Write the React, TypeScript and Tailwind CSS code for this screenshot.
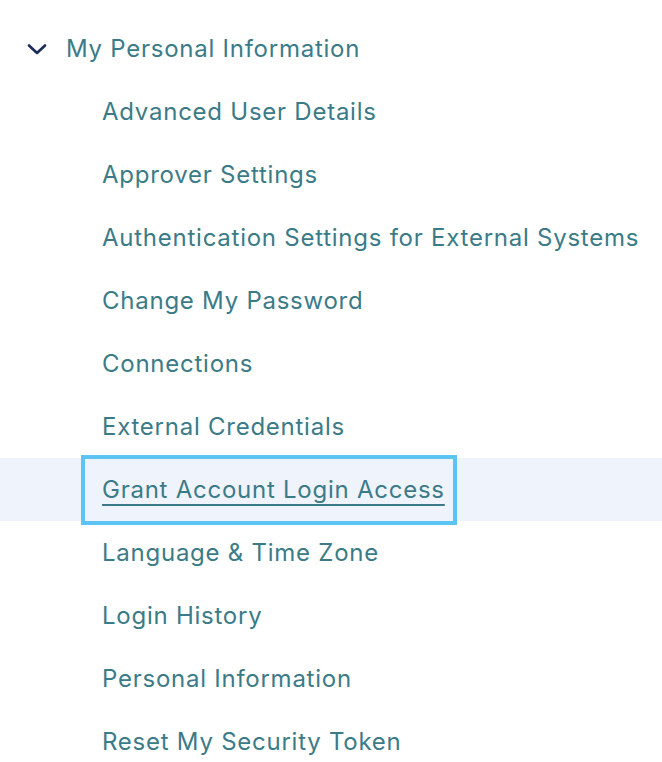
import React from "react";

const items = [
  "Advanced User Details",
  "Approver Settings",
  "Authentication Settings for External Systems",
  "Change My Password",
  "Connections",
  "External Credentials",
  "Grant Account Login Access",
  "Language & Time Zone",
  "Login History",
  "Personal Information",
  "Reset My Security Token",
];

export default function App() {
  return (
    <div
      className="w-[662px] h-[762px] bg-white overflow-hidden pt-[17px] text-[#3b7b88] tracking-[0.75px]"
      style={{ fontFamily: "Inter, 'Noto Sans', sans-serif" }}
    >
      <div className="h-[63px] flex items-center">
        <svg
          className="ml-[27px] w-[20px] h-[20px]"
          viewBox="0 0 20 20"
          fill="none"
          stroke="#1b2b5c"
          strokeWidth="2.6"
          strokeLinecap="round"
          strokeLinejoin="round"
        >
          <path d="M2 6.5 L10 14 L18 6.5" />
        </svg>
        <span className="ml-[19px] text-[24px] leading-none">My Personal Information</span>
      </div>
      {items.map((t) => {
        const active = t === "Grant Account Login Access";
        return (
          <div
            key={t}
            className={
              "h-[63px] flex items-center pl-[102px] " + (active ? "bg-[#eff3fb]" : "")
            }
          >
            {active ? (
              <span className="ml-[-21px] pl-[21px] pr-[8px] h-[70px] flex items-center border-4 border-[#5bc4f5] box-border">
                <span className="text-[24px] leading-none underline underline-offset-[6px] decoration-[1.5px] ml-[-4px]">
                  {t}
                </span>
              </span>
            ) : (
              <span className="text-[24px] leading-none">{t}</span>
            )}
          </div>
        );
      })}
    </div>
  );
}
